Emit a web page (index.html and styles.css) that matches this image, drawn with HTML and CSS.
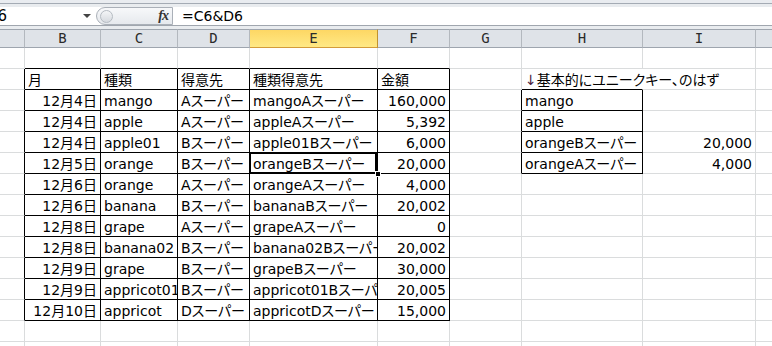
FILE: index.html
```html
<!DOCTYPE html>
<html lang="ja">
<head>
    <meta charset="UTF-8">
    <meta name="viewport" content="width=device-width, initial-scale=1.0">
    <title>Book1 - Excel</title>
    <link rel="stylesheet" href="styles.css">
</head>
<body>

<div class="ribbon-edge"></div>
<div class="formula-bar">
    <div class="formula-row">
        <div class="name-box"><span>E6</span><i class="drop"></i></div>
        <div class="fx-pill"><span class="grip"></span><span class="fx">fx</span></div>
        <div class="formula-text">=C6&amp;D6</div>
    </div>
</div>

<div class="sheet" id="sheet"></div>

<script>
    document.addEventListener('DOMContentLoaded', () => {
        const cols = ['A', 'B', 'C', 'D', 'E', 'F', 'G', 'H', 'I', 'J'];
        const values = {
            B2: '月', C2: '種類', D2: '得意先', E2: '種類得意先', F2: '金額',
            H2: '<span class="arrow">↓</span>基本的にユニークキー、のはず'
        };
        const orders = [
            ['12月4日', 'mango', 'Aスーパー', '160,000'],
            ['12月4日', 'apple', 'Aスーパー', '5,392'],
            ['12月4日', 'apple01', 'Bスーパー', '6,000'],
            ['12月5日', 'orange', 'Bスーパー', '20,000'],
            ['12月6日', 'orange', 'Aスーパー', '4,000'],
            ['12月6日', 'banana', 'Bスーパー', '20,002'],
            ['12月8日', 'grape', 'Aスーパー', '0'],
            ['12月8日', 'banana02', 'Bスーパー', '20,002'],
            ['12月9日', 'grape', 'Bスーパー', '30,000'],
            ['12月9日', 'appricot01', 'Bスーパー', '20,005'],
            ['12月10日', 'appricot', 'Dスーパー', '15,000']
        ];
        orders.forEach((o, i) => {
            const r = i + 3;
            values['B' + r] = o[0];
            values['C' + r] = o[1];
            values['D' + r] = o[2];
            values['E' + r] = o[1] + o[2];
            values['F' + r] = o[3];
        });
        // lookup list on the right
        values.H3 = 'mango';
        values.H4 = 'apple';
        values.H5 = 'orangeBスーパー';
        values.H6 = 'orangeAスーパー';
        values.I5 = '20,000';
        values.I6 = '4,000';

        const sheet = document.getElementById('sheet');

        cols.forEach(c => {
            const head = document.createElement('div');
            head.className = 'col-head' + (c === 'E' ? ' picked' : '');
            head.textContent = c;
            sheet.appendChild(head);
        });

        const inMain = (c, r) => 'BCDEF'.includes(c) && r >= 2 && r <= 13;
        const inList = (c, r) => c === 'H' && r >= 3 && r <= 6;

        for (let r = 1; r <= 15; r++) {
            cols.forEach(c => {
                const key = c + r;
                const cell = document.createElement('div');
                const cls = ['cell'];
                if (inMain(c, r) || inList(c, r)) cls.push('edge-r', 'edge-b');
                if ((c === 'A' && r >= 2 && r <= 13) || (c === 'G' && r >= 3 && r <= 6)) cls.push('edge-r');
                if (('BCDEF'.includes(c) && r === 1) || key === 'H2') cls.push('edge-b');
                if (((c === 'B' || c === 'F') && r >= 3) || c === 'I') cls.push('num');
                if (key === 'H2') cls.push('spill');
                if (key === 'E6') cls.push('active');
                cell.className = cls.join(' ');
                if (values[key]) cell.innerHTML = values[key];
                sheet.appendChild(cell);
            });
        }
    });
</script>

</body>
</html>
```

FILE: styles.css
```css
body {
    margin: 0;
    background: #fff;
    overflow: hidden;
    font-family: "DejaVu Sans", "Noto Sans CJK JP", sans-serif;
}

/* strip of the ribbon above the formula bar */
.ribbon-edge {
    height: 3px;
    background: #e9ecf0;
    border-bottom: 1px solid #a4abb4;
}

.formula-bar {
    padding: 3px 0;
    background: #e9ecef;
}
.formula-row {
    display: flex;
    align-items: stretch;
    height: 18px;
    background: #fff;
    border-bottom: 1px solid #a0a6ae;
}
.name-box {
    display: flex;
    align-items: center;
    justify-content: space-between;
    width: 105px;
    margin-left: -12px;
    padding-right: 2px;
    box-sizing: border-box;
    font-size: 15px;
    color: #000;
}
.drop {
    width: 0;
    height: 0;
    border-left: 4px solid transparent;
    border-right: 4px solid transparent;
    border-top: 4px solid #444;
}
.fx-pill {
    display: flex;
    align-items: center;
    justify-content: space-between;
    width: 77px;
    margin-left: 3px;
    padding: 0 4px 0 3px;
    box-sizing: border-box;
    border: 1px solid #aab0b8;
    border-radius: 9px 0 0 9px;
    background: linear-gradient(#f7f8fa, #e6e9ed);
}
.grip {
    width: 11px;
    height: 11px;
    border-radius: 50%;
    border: 1px solid #b5bbc2;
    background: linear-gradient(#f4f5f7, #d6dadf);
}
.fx {
    font-family: "Liberation Serif", serif;
    font-style: italic;
    font-weight: bold;
    font-size: 14px;
    color: #333;
    letter-spacing: -1px;
}
.formula-text {
    padding-left: 9px;
    font-size: 14px;
    line-height: 19px;
    color: #000;
}

/* worksheet grid */
.sheet {
    display: grid;
    grid-template-columns: 73px 76px 77px 72px 128px 72px 72px 121px 113px 72px;
    grid-template-rows: 19px;
    grid-auto-rows: 21px;
    margin-left: -48px;
}
.col-head {
    box-sizing: border-box;
    border-top: 1px solid #9ea5ae;
    border-bottom: 1px solid #9ea5ae;
    border-right: 1px solid #b3b8be;
    background: #dfe3e8;
    font-family: "DejaVu Sans Mono", monospace;
    font-size: 14px;
    line-height: 17px;
    text-align: center;
    color: #2b2b2b;
}
.col-head.picked {
    background: linear-gradient(#fdd764, #ffe985);
    border-bottom-color: #d39b3a;
    border-right-color: #c0922f;
}

.cell {
    box-sizing: border-box;
    border-right: 1px solid #dadcdd;
    border-bottom: 1px solid #dadcdd;
    padding: 0 3px;
    font-size: 14px;
    font-feature-settings: "palt";
    line-height: 22px;
    white-space: nowrap;
    overflow: hidden;
    color: #000;
}
.cell.num {
    text-align: right;
}
.cell.edge-r {
    border-right-color: #000;
}
.cell.edge-b {
    border-bottom-color: #000;
}
.cell.spill {
    overflow: visible;
    border-right-color: #fff;
}
.arrow {
    color: #4a2040;
}

/* current cell with its fill handle */
.cell.active {
    position: relative;
    overflow: visible;
}
.cell.active::after {
    content: "";
    position: absolute;
    left: -1px;
    top: -1px;
    right: 0;
    bottom: -1px;
    border: 2px solid #000;
}
.cell.active::before {
    content: "";
    position: absolute;
    right: -4px;
    bottom: -4px;
    width: 4px;
    height: 4px;
    background: #000;
    border: 1px solid #fff;
    z-index: 1;
}
```
